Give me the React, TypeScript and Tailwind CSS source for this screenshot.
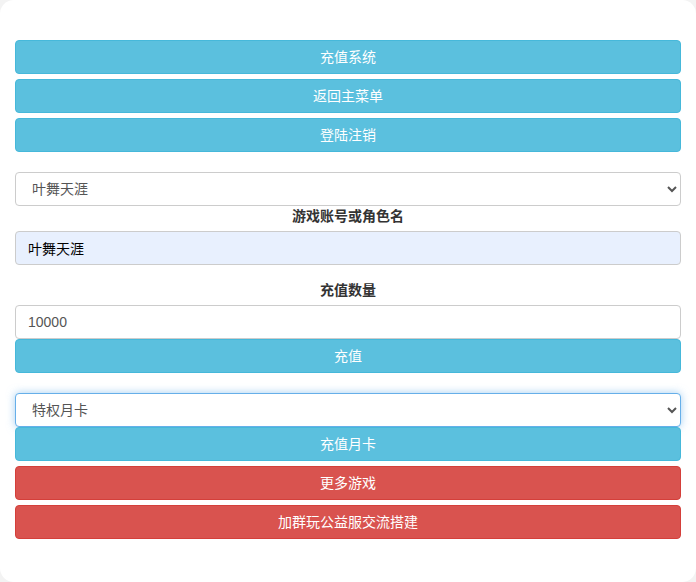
import React from "react";

const font = { fontFamily: '"Liberation Sans", "Noto Sans CJK SC", sans-serif' };

function Btn({ children, tone = "info", className = "" }: { children: React.ReactNode; tone?: "info" | "danger"; className?: string }) {
  const colors =
    tone === "info"
      ? "bg-[#5bc0de] border-[#46b8da]"
      : "bg-[#d9534f] border-[#d43f3a]";
  return (
    <button
      type="button"
      className={`block w-full h-[34px] rounded-[4px] border text-[14px] leading-[20px] text-white ${colors} ${className}`}
    >
      {children}
    </button>
  );
}

export default function App() {
  return (
    <div className="min-h-screen bg-[#f3f3f3]" style={font}>
      <div className="h-[582px] rounded-[14px] bg-white px-[15px] pt-[40px]">
        {/* 菜单 */}
        <Btn>充值系统</Btn>
        <Btn className="mt-[5px]">返回主菜单</Btn>
        <Btn className="mt-[5px]">登陆注销</Btn>

        {/* 区服 */}
        <select
          className="mt-[20px] block h-[34px] w-full rounded-[4px] border border-[#ccc] bg-white px-[12px] text-[14px] text-[#555]"
          defaultValue="a"
        >
          <option value="a">叶舞天涯</option>
        </select>

        <label className="block text-center text-[14px] font-bold leading-[20px] text-[#333] mb-[5px]">
          游戏账号或角色名
        </label>
        <input
          className="block h-[34px] w-full rounded-[4px] border border-[#ccc] bg-[#e8f0fe] px-[12px] text-[14px] text-black outline-none"
          defaultValue="叶舞天涯"
        />

        <label className="mt-[15px] block text-center text-[14px] font-bold leading-[20px] text-[#333] mb-[5px]">
          充值数量
        </label>
        <input
          className="block h-[34px] w-full rounded-[4px] border border-[#ccc] bg-white px-[12px] text-[14px] text-[#555] outline-none"
          defaultValue="10000"
        />
        <Btn>充值</Btn>

        {/* 月卡 */}
        <select
          className="mt-[20px] block h-[34px] w-full rounded-[4px] border border-[#66afe9] bg-white px-[12px] text-[14px] text-[#555] shadow-[0_0_8px_rgba(102,175,233,0.6)] outline-none"
          defaultValue="m"
        >
          <option value="m">特权月卡</option>
        </select>
        <Btn>充值月卡</Btn>

        <Btn tone="danger" className="mt-[5px]">更多游戏</Btn>
        <Btn tone="danger" className="mt-[5px]">加群玩公益服交流搭建</Btn>
      </div>
    </div>
  );
}
